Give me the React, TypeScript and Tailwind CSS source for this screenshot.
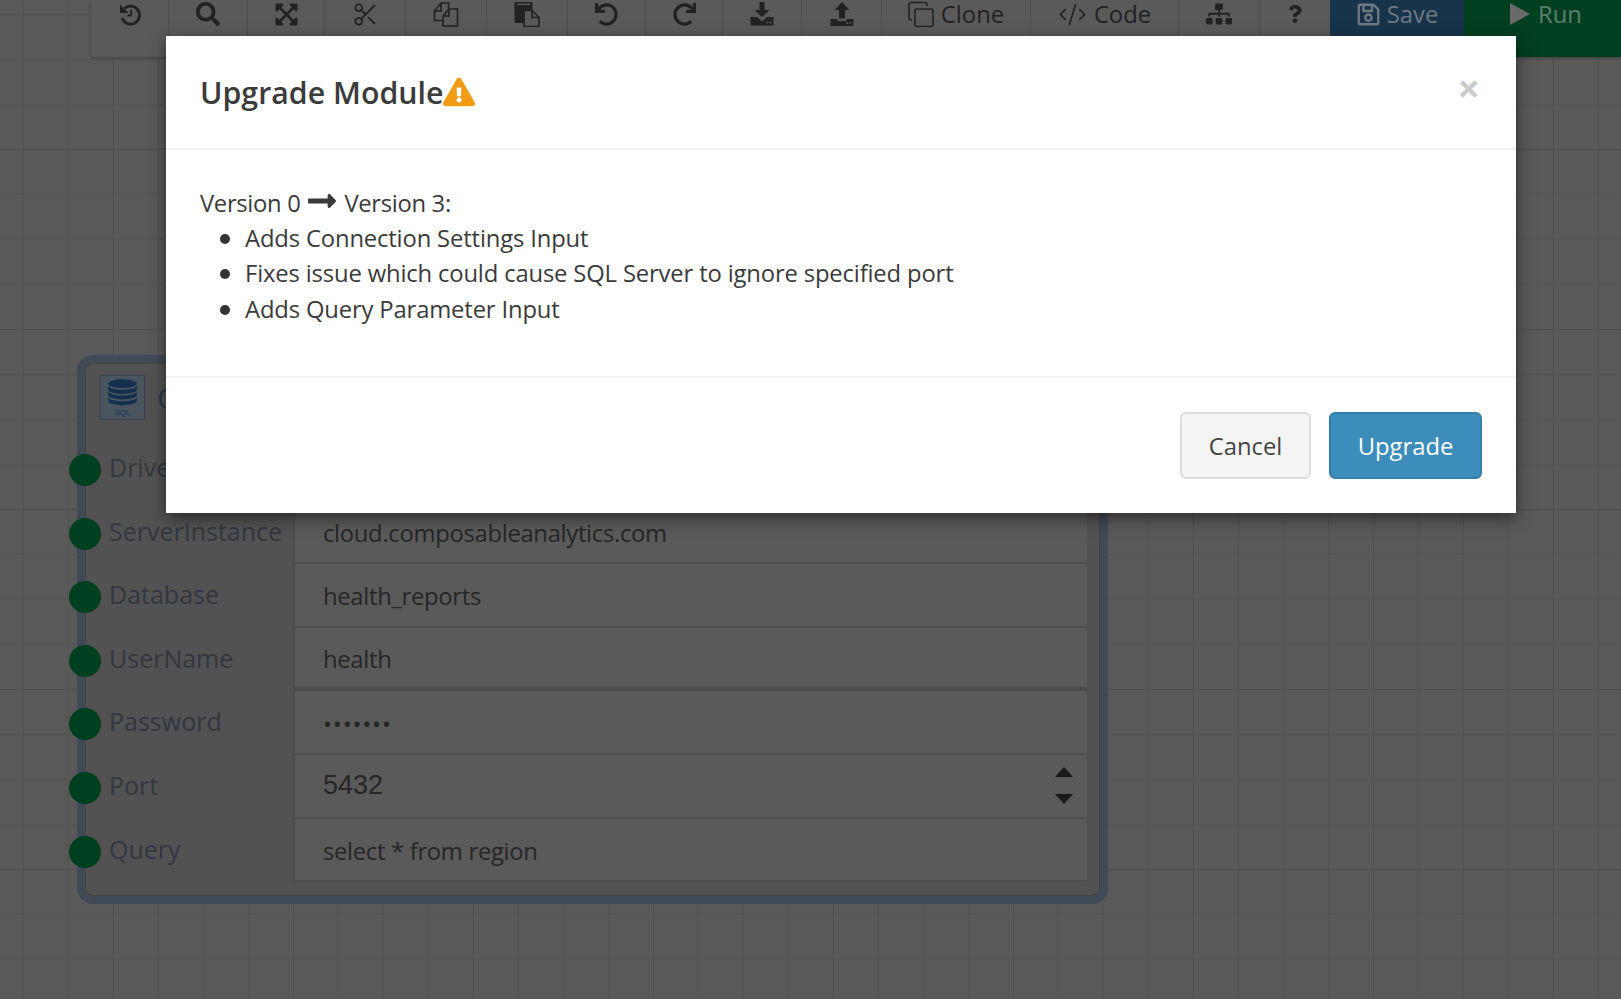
import React from "react";
import { FaSearch, FaExpandArrowsAlt, FaUndo, FaRedo, FaSitemap, FaQuestion, FaRegSave, FaExclamationTriangle, FaLongArrowAltRight } from "react-icons/fa";
import { Scissors, CodeXml } from "lucide-react";

const rows = [
  { label: "Driver", value: "PostgreSQL" },
  { label: "ServerInstance", value: "cloud.composableanalytics.com" },
  { label: "Database", value: "health_reports" },
  { label: "UserName", value: "health", thick: true },
  { label: "Password", value: "•••••••", pw: true },
  { label: "Port", value: "5432", num: true },
  { label: "Query", value: "select * from region" },
];

const changes = [
  "Adds Connection Settings Input",
  "Fixes issue which could cause SQL Server to ignore specified port",
  "Adds Query Parameter Input",
];

function HistoryIcon() {
  return (
    <svg viewBox="0 0 24 24" className="w-[24px] h-[24px]" fill="none" stroke="currentColor">
      <path d="M6.500 6.500A9 9 0 1 1 4 16" strokeWidth="2.800" />
      <path d="M2 2.500V11h8.500z" fill="currentColor" stroke="none" />
      <path d="M13 8v5.500H9.500" strokeWidth="1.800" />
    </svg>
  );
}
function FilesIcon() {
  return (
    <svg viewBox="0 0 26 26" className="w-[26px] h-[26px]" fill="none" stroke="currentColor" strokeWidth="1.700">
      <path d="M1.500 10 8 2h7.500v7" />
      <path d="M8 2v8H1.500v9.500H10" />
      <path d="M10 15l6-7h8.500v17H10z" />
      <path d="M16 8v7h-6" />
    </svg>
  );
}
function PasteIcon() {
  return (
    <svg viewBox="0 0 26 26" className="w-[26px] h-[26px]">
      <rect x="0.500" y="1" width="18" height="21" rx="1" fill="currentColor" />
      <rect x="3" y="2.500" width="13" height="1.500" fill="#5a5a5a" />
      <path d="M10 9.500h8l7 7v9H10z" fill="#5a5a5a" stroke="currentColor" strokeWidth="1.700" />
      <path d="M18 9.500v7h7" fill="none" stroke="currentColor" strokeWidth="1.700" />
    </svg>
  );
}
function DownloadIcon() {
  return (
    <svg viewBox="0 0 24 24" className="w-[24px] h-[24px]" fill="currentColor">
      <path d="M9.500 0h5v8h5L12 15 4.500 8h5z" />
      <path d="M0.500 15H7l5 4.500L17 15h6.500v8.500H0.500z" />
      <circle cx="17.500" cy="20.500" r="1" fill="#5a5a5a" />
      <circle cx="20.500" cy="20.500" r="1" fill="#5a5a5a" />
    </svg>
  );
}
function UploadIcon() {
  return (
    <svg viewBox="0 0 24 24" className="w-[24px] h-[24px]" fill="currentColor">
      <path d="M12 0l7.500 8H15v8.500H9V8H4.500z" />
      <path d="M0.500 17H7.500v2h9v-2h7v7H0.500z" />
      <circle cx="17.500" cy="21" r="1" fill="#5a5a5a" />
      <circle cx="20.500" cy="21" r="1" fill="#5a5a5a" />
    </svg>
  );
}
function CloneIcon() {
  return (
    <svg viewBox="0 0 26 26" className="w-[26px] h-[26px]" fill="none" stroke="currentColor" strokeWidth="1.600">
      <rect x="7" y="8" width="18" height="17.500" rx="2" />
      <path d="M19 5V3.500a2 2 0 0 0-2-2H3a2 2 0 0 0-2 2V17a2 2 0 0 0 2 2h1" />
    </svg>
  );
}

const tools = [
  { w: "w-[78px]", icon: <HistoryIcon /> },
  { w: "w-[79px]", icon: <FaSearch className="w-[24px] h-[24px]" /> },
  { w: "w-[77px]", icon: <FaExpandArrowsAlt className="w-[25px] h-[25px]" /> },
  { w: "w-[81px]", icon: <Scissors className="w-[27px] h-[27px]" strokeWidth={1.600} /> },
  { w: "w-[81px]", icon: <FilesIcon /> },
  { w: "w-[81px]", icon: <PasteIcon /> },
  { w: "w-[78px]", icon: <FaUndo className="w-[23px] h-[23px]" /> },
  { w: "w-[77px]", icon: <FaRedo className="w-[23px] h-[23px]" /> },
  { w: "w-[79px]", icon: <DownloadIcon /> },
  { w: "w-[80px]", icon: <UploadIcon /> },
];

function Sql() {
  return (
    <div className="w-[45px] h-[45px] border border-[#3a4450] bg-[#4a5560] flex items-center justify-center">
      <svg viewBox="0 0 45 45" className="w-[45px] h-[45px]">
        <ellipse cx="22.500" cy="8" rx="15" ry="4.500" fill="#13304f" />
        <path d="M7.500 10v4c0 2.500 6.700 4.500 15 4.500s15-2 15-4.500v-4c0 2.500-6.700 4.500-15 4.500s-15-2-15-4.500z" fill="#13304f" />
        <path d="M7.500 16v4c0 2.500 6.700 4.500 15 4.500s15-2 15-4.500v-4c0 2.500-6.700 4.500-15 4.500s-15-2-15-4.500z" fill="#13304f" />
        <path d="M7.500 22v4c0 2.500 6.700 4.500 15 4.500s15-2 15-4.500v-4c0 2.500-6.700 4.500-15 4.500s-15-2-15-4.500z" fill="#13304f" />
        <text x="22.500" y="41" textAnchor="middle" fontSize="8" fontWeight="700" fontFamily="Liberation Sans, sans-serif" fill="#1f3d5c">SQL</text>
      </svg>
    </div>
  );
}

export default function App() {
  return (
    <div className="relative w-[1621px] h-[999px] overflow-hidden bg-[#595959] font-['Open_Sans',sans-serif] bg-[linear-gradient(#4e4e4e_1px,transparent_1px),linear-gradient(90deg,#4e4e4e_1px,transparent_1px),linear-gradient(#535353_1px,transparent_1px),linear-gradient(90deg,#535353_1px,transparent_1px)] bg-[length:180px_180px,180px_180px,45px_45px,45px_45px] bg-[position:0_149px,113px_0,0_14px,23px_0]">
      {/* toolbar */}
      <div className="flex h-[57px] ml-[91px] bg-[#5a5a5a] rounded-bl-[4px] shadow-[0_1px_3px_rgba(0,0,0,0.3)] text-[#222222]">
        {tools.map((t, i) => (
          <div key={i} className={`${t.w} shrink-0 flex justify-center border-r border-[#4f4f4f]`}>
            <div className="h-[28px] flex items-center">{t.icon}</div>
          </div>
        ))}
        <div className="w-[149px] shrink-0 flex justify-center border-r border-[#4f4f4f] text-[23.800px] leading-[28px] gap-[7px]">
          <div className="h-[28px] flex items-center"><CloneIcon /></div>
          <span>Clone</span>
        </div>
        <div className="w-[148px] shrink-0 flex justify-center border-r border-[#4f4f4f] text-[23.800px] leading-[28px] gap-[7px]">
          <div className="h-[28px] flex items-center"><CodeXml className="w-[29px] h-[29px]" strokeWidth={1.400} /></div>
          <span>Code</span>
        </div>
        <div className="w-[81px] shrink-0 flex justify-center border-r border-[#4f4f4f]">
          <div className="h-[28px] flex items-center"><FaSitemap className="w-[26px] h-[26px]" /></div>
        </div>
        <div className="w-[70px] shrink-0 flex justify-center">
          <div className="h-[28px] flex items-center"><FaQuestion className="w-[18px] h-[18px]" /></div>
        </div>
        <div className="w-[134px] shrink-0 flex justify-center bg-[#17344b] text-[#6d7882] text-[23.800px] leading-[28px] gap-[6px]">
          <div className="h-[28px] flex items-center"><FaRegSave className="w-[25px] h-[25px]" /></div>
          <span>Save</span>
        </div>
        <div className="flex-1 flex pl-[46px] bg-[#003f20] text-[#5d7f6d] text-[23.800px] leading-[28px] gap-[8px]">
          <svg viewBox="0 0 20 22" className="w-[20px] h-[22px] mt-[3px] text-[#6a6a6a]">
            <path d="M0 0l20 11L0 22z" fill="currentColor" />
          </svg>
          <span>Run</span>
        </div>
      </div>

      {/* node */}
      <div className="relative ml-[77px] mt-[298px] w-[1031px] h-[549px] rounded-[16px] border-[8px] border-[#414a57] bg-[#525252] shadow-[inset_0_0_0_1px_#424242] pt-[12px]">
        <div className="flex items-center gap-[12px] pl-[15px] h-[45px]">
          <Sql />
          <span className="text-[30px] text-[#2c3a49]">Connection</span>
        </div>
        <div className="mt-[17px]">
          {rows.map((r, i) => (
            <div key={i} className="relative flex h-[63.600px]">
              <div className="absolute -left-[16px] top-[17px] w-[32px] h-[32px] rounded-full bg-[#003f20]" />
              <div className="w-[208px] shrink-0 pl-[24px] pt-[12px] text-[25px] leading-[36px] text-[#33373f]">{r.label}</div>
              <div className={`w-[794px] shrink-0 bg-[#5a5a5a] border-l-2 border-[#4d4d4d] pl-[28px] flex items-center justify-between pr-[14px] text-[#262626] ${r.thick ? "border-b-4" : "border-b-2"}`}>
                {r.num ? (
                  <span className="font-['Liberation_Sans',sans-serif] text-[27px] -mt-[2px]">{r.value}</span>
                ) : (
                  <span className={r.pw ? "text-[24px] tracking-[0.8px] pt-[3px]" : "text-[23.800px] tracking-[-0.3px] pt-[4px]"}>{r.value}</span>
                )}
                {r.num && (
                  <svg viewBox="0 0 18 37" className="w-[18px] h-[37px] text-[#1a1a1a]">
                    <path d="M9 0l9 10H0z M0 27h18L9 37z" fill="currentColor" />
                  </svg>
                )}
              </div>
            </div>
          ))}
        </div>
      </div>

      {/* modal */}
      <div className="absolute left-[166px] top-[36px] w-[1350px] h-[477px] bg-white shadow-[0_5px_15px_rgba(0,0,0,0.5)] text-[#3b3b3b] flex flex-col">
        <div className="h-[114px] shrink-0 border-b-2 border-[#f1f1f1] pl-[34px] pr-[36px] flex items-center justify-between">
          <h4 className="flex items-center text-[30.300px] font-[550] pt-[2px]">
            Upgrade Module
            <FaExclamationTriangle className="w-[32px] h-[32px] -mt-[2px] text-[#f39c12]" />
          </h4>
          <button className="text-[40px] leading-none font-bold text-[#cccccc] -mt-[8px]">×</button>
        </div>
        <div className="h-[228px] shrink-0 border-b-2 border-[#f1f1f1] pl-[34px] pt-[35px] text-[23.800px] leading-[35.700px]">
          <div className="flex items-center gap-[6px] tracking-[-0.32px] pt-[1px] -mb-[1px]">
            <span>Version 0</span>
            <FaLongArrowAltRight className="w-[32px] h-[32px] -mt-[6px]" />
            <span>Version 3:</span>
          </div>
          <ul className="tracking-[-0.15px]">
            {changes.map((c) => (
              <li key={c} className="flex items-center gap-[15px] pl-[20px]">
                <span className="w-[10px] h-[10px] rounded-full bg-[#333] shrink-0" />
                <span>{c}</span>
              </li>
            ))}
          </ul>
        </div>
        <div className="flex-1 flex justify-end items-start gap-[18px] pt-[34px] pr-[34px]">
          <button className="w-[131px] h-[67px] pt-[2px] rounded-[6px] border-2 border-[#dddddd] bg-[#f4f4f4] text-[23.800px] text-[#444]">Cancel</button>
          <button className="w-[153px] h-[67px] pt-[2px] rounded-[6px] border-2 border-[#367fa9] bg-[#3c8dbc] text-[23.800px] text-white">Upgrade</button>
        </div>
      </div>
    </div>
  );
}
